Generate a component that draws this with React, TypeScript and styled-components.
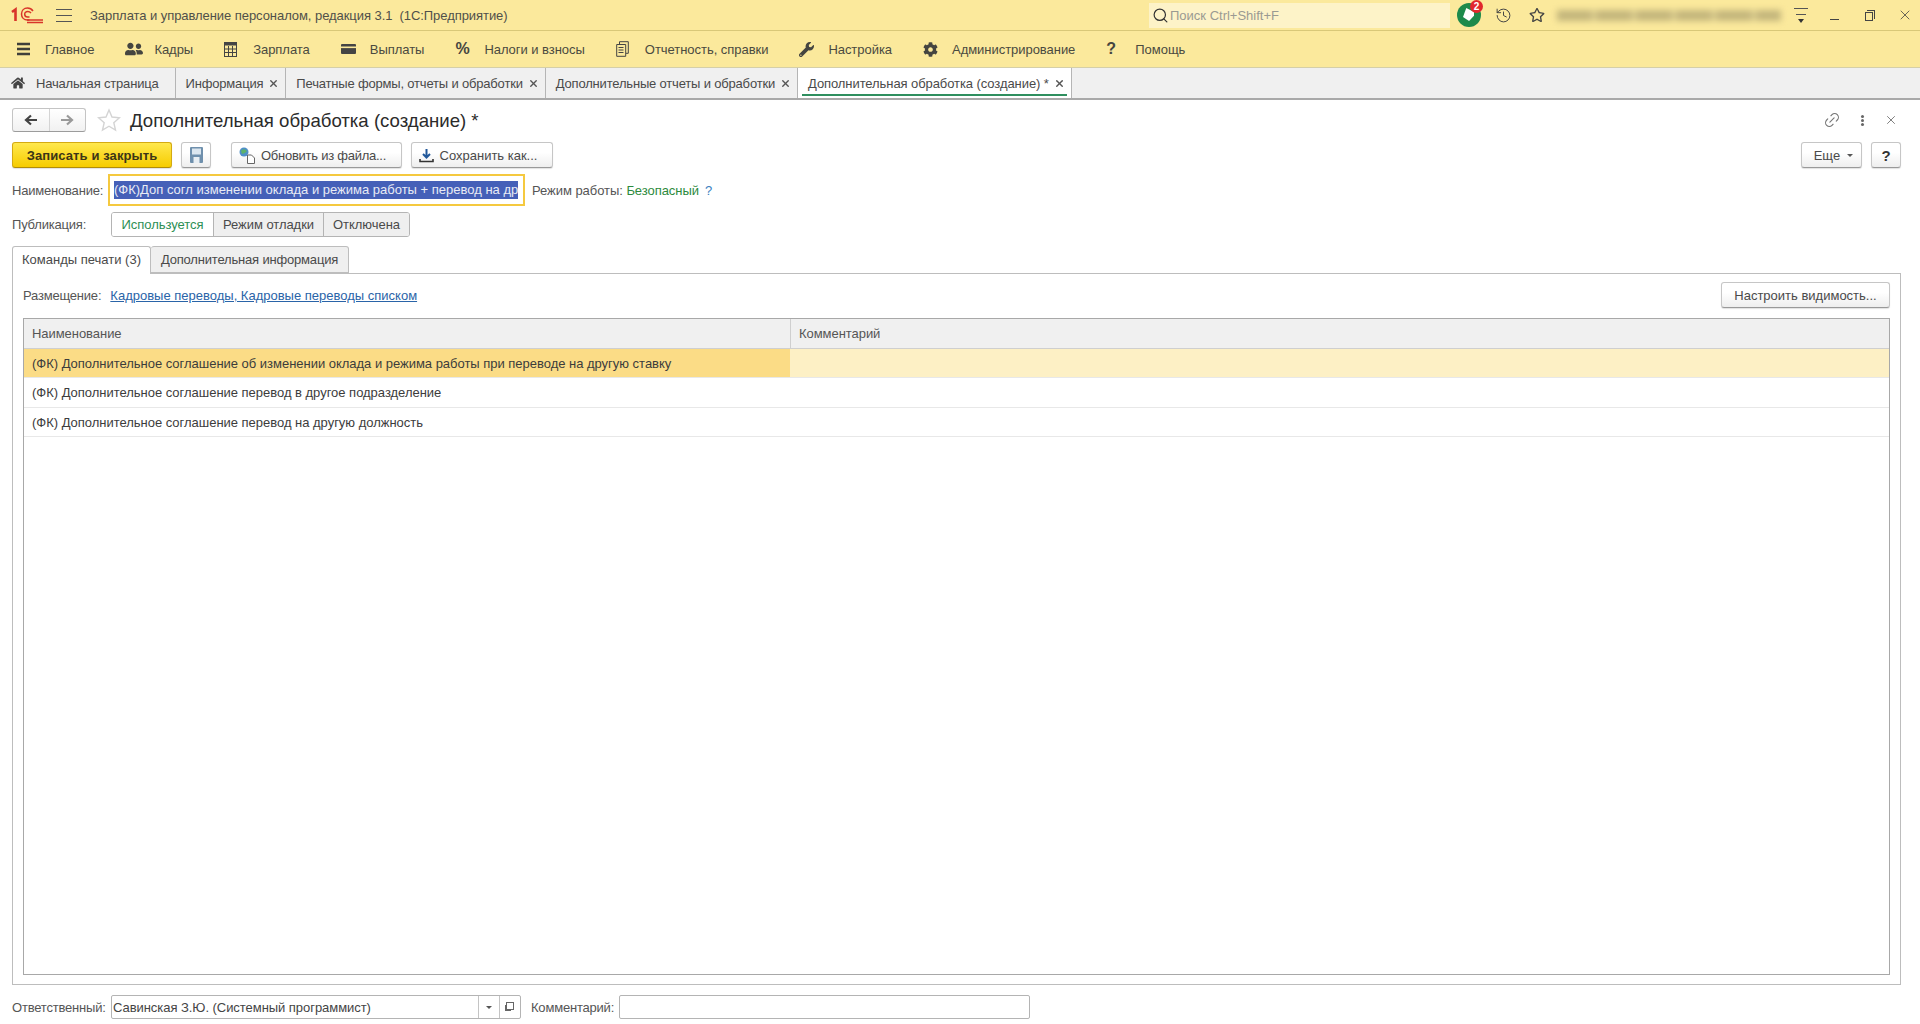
import React from "react";
import styled, { createGlobalStyle } from "styled-components";
import {
  FaHome,
  FaUserFriends,
  FaWrench,
  FaCog,
  FaRegStar,
} from "react-icons/fa";
import { Link2, History, X, Search } from "lucide-react";

const GlobalStyle = createGlobalStyle`
  html, body {
    margin: 0;
    padding: 0;
    background: #fff;
  }
  * {
    box-sizing: border-box;
  }
`;

const Page = styled.div`
  width: 1920px;
  height: 1024px;
  overflow: hidden;
  display: flex;
  flex-direction: column;
  font-family: "Liberation Sans", Arial, sans-serif;
  font-size: 13px;
  color: #4a4a4a;
  background: #fff;
`;

const TitleBar = styled.div`
  height: 31px;
  flex: none;
  display: flex;
  align-items: center;
  padding-right: 7px;
  background: #fbe99c;
  border-bottom: 1px solid #d9c878;
`;

const Logo = styled.svg`
  width: 32px;
  height: 18px;
  margin-left: 11px;
  flex: none;
`;

const Burger = styled.div`
  width: 16px;
  height: 13px;
  margin-left: 13px;
  flex: none;
  border-top: 1px solid #555;
  border-bottom: 1px solid #555;
  position: relative;
  &::after {
    content: "";
    position: absolute;
    left: 0;
    right: 0;
    top: 5px;
    height: 1px;
    background: #555;
  }
`;

const AppTitle = styled.div`
  margin-left: 18px;
  white-space: pre;
  color: #50504a;
  letter-spacing: -0.06px;
`;

const SearchBox = styled.div`
  margin-left: auto;
  width: 301px;
  height: 25px;
  display: flex;
  align-items: center;
  padding-left: 3px;
  background: #fdf3c8;
  color: #9a9a92;
  svg {
    color: #333;
    margin-right: 1px;
  }
`;

const Badge = styled.div`
  width: 24px;
  height: 24px;
  margin-left: 7px;
  flex: none;
  border-radius: 50%;
  background: #1d8a4b;
  position: relative;
  &::before {
    content: "";
    position: absolute;
    left: 6px;
    top: 5px;
    width: 11px;
    height: 13px;
    background: #fff;
    clip-path: polygon(30% 0, 100% 30%, 100% 60%, 55% 100%, 0 70%);
  }
`;

const BadgeCount = styled.span`
  position: absolute;
  top: -3px;
  right: -2px;
  width: 13px;
  height: 13px;
  border-radius: 50%;
  background: #e1282d;
  color: #fff;
  font-size: 10px;
  font-weight: bold;
  line-height: 13px;
  text-align: center;
`;

const TitleIcon = styled.div<{ $left: number; $size?: number }>`
  margin-left: ${(p) => p.$left}px;
  flex: none;
  display: flex;
  color: #444;
  svg {
    width: ${(p) => p.$size ?? 17}px;
    height: ${(p) => p.$size ?? 17}px;
  }
`;

const BlurredUser = styled.div`
  width: 224px;
  height: 11px;
  margin-left: 12px;
  flex: none;
  background: repeating-linear-gradient(
    90deg,
    #c4b67c 0 34px,
    #d8ca8c 34px 40px
  );
  filter: blur(3px);
`;

const FilterIcon = styled.div`
  width: 14px;
  height: 15px;
  margin-left: 13px;
  flex: none;
  border-top: 1px solid #555;
  position: relative;
  &::before {
    content: "";
    position: absolute;
    left: 2px;
    right: 2px;
    top: 5px;
    height: 1px;
    background: #555;
  }
  &::after {
    content: "";
    position: absolute;
    left: 4px;
    bottom: 0;
    border-left: 3px solid transparent;
    border-right: 3px solid transparent;
    border-top: 4px solid #333;
  }
`;

const MinButton = styled.div`
  width: 9px;
  height: 1px;
  margin: 8px 0 0 22px;
  flex: none;
  background: #444;
`;

const RestoreButton = styled.div`
  width: 8px;
  height: 9px;
  margin-left: 26px;
  flex: none;
  border: 1px solid #444;
  position: relative;
  top: 1px;
  &::before {
    content: "";
    position: absolute;
    left: 1px;
    top: -3px;
    width: 7px;
    height: 8px;
    border-top: 1px solid #444;
    border-right: 1px solid #444;
  }
`;

const MenuBar = styled.div`
  height: 37px;
  flex: none;
  display: flex;
  align-items: center;
  padding-left: 14px;
  background: #fbe99c;
  border-bottom: 1px solid #d5cfa8;
`;

const MenuItem = styled.div`
  display: flex;
  align-items: center;
  padding-right: 29px;
  color: #4a4a40;
  letter-spacing: -0.04px;
`;

const MenuIcon = styled.span`
  width: 31px;
  flex: none;
  display: flex;
  align-items: center;
  padding-left: 2px;
  color: #454540;
  font-size: 16px;
  font-weight: bold;
`;

const TabBar = styled.div`
  height: 32px;
  flex: none;
  display: flex;
  background: #f0f0f0;
  border-bottom: 2px solid #a9a9a9;
`;

const PageTab = styled.div<{ $active?: boolean }>`
  display: flex;
  align-items: center;
  padding: 0 6px 0 10px;
  border-right: 1px solid #b5b5b5;
  background: ${(p) => (p.$active ? "#fff" : "transparent")};
  position: relative;
  white-space: pre;
  letter-spacing: ${(p) => (p.$active ? "-0.08px" : "-0.18px")};
  ${(p) =>
    p.$active &&
    `&::after {
      content: "";
      position: absolute;
      left: 4px;
      right: 4px;
      bottom: 2px;
      height: 2px;
      background: #2f8f5f;
    }`}
`;

const HomeTab = styled(PageTab)`
  padding: 0 16px 0 11px;
  svg {
    margin-right: 11px;
    color: #444;
  }
`;

const CloseMark = styled(X)`
  margin-left: 5px;
  color: #555;
`;

const Content = styled.div`
  flex: 1;
  min-height: 0;
  display: flex;
  flex-direction: column;
  padding: 8px 19px 5px 12px;
`;

const FormHeader = styled.div`
  height: 24px;
  flex: none;
  display: flex;
  align-items: center;
`;

const NavGroup = styled.div`
  width: 74px;
  height: 24px;
  flex: none;
  display: flex;
  border: 1px solid #c4c4c4;
  border-bottom-color: #9c9c9c;
  border-radius: 3px;
  background: linear-gradient(#fff, #f1f1f1);
`;

const NavButton = styled.div<{ $dim?: boolean }>`
  flex: 1;
  display: flex;
  align-items: center;
  justify-content: center;
  color: ${(p) => (p.$dim ? "#999" : "#444")};
  & + & {
    border-left: 1px solid #d4d4d4;
  }
`;

const HeaderStar = styled.svg`
  width: 24px;
  height: 24px;
  margin-left: 11px;
  flex: none;
`;

const FormTitle = styled.h1`
  margin: 2px 0 0 9px;
  font-size: 18.6px;
  font-weight: normal;
  color: #2b2b2b;
  white-space: pre;
`;

const HeaderTools = styled.div`
  margin-left: auto;
  margin-right: 3px;
  display: flex;
  align-items: center;
  color: #777;
`;

const KebabDots = styled.div`
  width: 3px;
  height: 3px;
  margin: 0 20px 0 20px;
  border-radius: 50%;
  background: #666;
  box-shadow: 0 -4px 0 #666, 0 4px 0 #666;
`;

const CommandBar = styled.div`
  height: 26px;
  margin-top: 10px;
  flex: none;
  display: flex;
  align-items: stretch;
`;

const Button = styled.div<{ $width?: number; $left?: number; $tight?: boolean }>`
  width: ${(p) => (p.$width ? `${p.$width}px` : "auto")};
  margin-left: ${(p) => p.$left ?? 0}px;
  flex: none;
  display: flex;
  align-items: center;
  justify-content: center;
  border: 1px solid #c6c6c6;
  border-bottom-color: #999;
  border-radius: 3px;
  background: linear-gradient(#fff 40%, #eeeeee);
  box-shadow: 0 1px 1px rgba(0, 0, 0, 0.12);
  color: #4a4a4a;
  white-space: pre;
  letter-spacing: ${(p) => (p.$tight ? "-0.25px" : "0")};
  svg {
    margin-right: 6px;
    flex: none;
  }
`;

const PrimaryButton = styled(Button)`
  border-color: #d4aa12;
  border-bottom-color: #b18d08;
  background: linear-gradient(#ffe84d, #f6cc00);
  color: #3c3517;
  font-weight: bold;
  letter-spacing: 0.1px;
`;

const IconTextButton = styled(Button)`
  padding-right: 8px;
`;

const MoreButton = styled(Button)`
  padding-left: 4px;
`;

const HelpButton = styled(Button)`
  font-size: 15px;
  font-weight: bold;
  color: #333;
`;

const VisibilityButton = styled(Button)`
  height: 26px;
`;

const Spacer = styled.div`
  margin-left: auto;
`;

const NameRow = styled.div`
  height: 32px;
  margin-top: 6px;
  flex: none;
  display: flex;
  align-items: center;
`;

const FieldLabel = styled.span<{ $width?: number; $left?: number }>`
  width: ${(p) => (p.$width ? `${p.$width}px` : "auto")};
  margin-left: ${(p) => p.$left ?? 0}px;
  flex: none;
  color: #555;
  white-space: pre;
  letter-spacing: -0.2px;
`;

const NameInput = styled.div`
  width: 417px;
  height: 32px;
  flex: none;
  display: flex;
  align-items: center;
  padding-left: 4px;
  border: 2px solid #f5c93f;
  overflow: hidden;
`;

const SelectedText = styled.span`
  height: 18px;
  line-height: 18px;
  white-space: pre;
  background: #4560b8;
  color: #e8ebf5;
`;

const GreenText = styled.span`
  color: #2d8a3d;
`;

const HelpMark = styled.span`
  margin-left: 6px;
  color: #3c7fc0;
`;

const ModeInfo = styled.div`
  margin-left: 7px;
  white-space: pre;
  color: #555;
  letter-spacing: -0.05px;
`;

const PublishRow = styled.div`
  height: 25px;
  margin-top: 6px;
  flex: none;
  display: flex;
  align-items: center;
`;

const Segments = styled.div`
  display: flex;
  height: 25px;
  border: 1px solid #b4b4b4;
  border-radius: 3px;
  overflow: hidden;
`;

const Segment = styled.div<{ $width: number; $on?: boolean }>`
  width: ${(p) => p.$width}px;
  display: flex;
  align-items: center;
  justify-content: center;
  background: ${(p) => (p.$on ? "#fff" : "#efefef")};
  color: ${(p) => (p.$on ? "#2d8f55" : "#4a4a4a")};
  letter-spacing: -0.05px;
  & + & {
    border-left: 1px solid #b4b4b4;
  }
`;

const PanelTabs = styled.div`
  height: 27px;
  margin-top: 9px;
  flex: none;
  display: flex;
`;

const PanelTab = styled.div<{ $width: number; $active?: boolean }>`
  width: ${(p) => p.$width}px;
  display: flex;
  align-items: center;
  justify-content: center;
  padding-bottom: ${(p) => (p.$active ? "3px" : "1px")};
  border: 1px solid #bdbdbd;
  border-bottom: ${(p) => (p.$active ? "none" : "1px solid #bdbdbd")};
  border-left: ${(p) => (p.$active ? "1px solid #bdbdbd" : "none")};
  border-radius: 3px 3px 0 0;
  background: ${(p) => (p.$active ? "#fff" : "#efefef")};
  height: ${(p) => (p.$active ? "28px" : "27px")};
  letter-spacing: ${(p) => (p.$active ? "0" : "-0.18px")};
  position: relative;
  z-index: 1;
`;

const Panel = styled.div`
  flex: 1;
  min-height: 0;
  display: flex;
  flex-direction: column;
  padding: 8px 10px 9px 10px;
  border: 1px solid #bdbdbd;
`;

const PlacementRow = styled.div`
  height: 26px;
  flex: none;
  display: flex;
  align-items: center;
`;

const PlacementLink = styled.a`
  margin-left: 9px;
  color: #2a64a8;
  text-decoration: underline;
`;

const Table = styled.div`
  flex: 1;
  min-height: 0;
  margin-top: 10px;
  border: 1px solid #a8a8a8;
`;

const TableHead = styled.div`
  height: 30px;
  display: grid;
  grid-template-columns: 766px 1fr;
  background: #f0f0f0;
  border-bottom: 1px solid #cfcfcf;
`;

const HeadCell = styled.div`
  display: flex;
  align-items: center;
  padding-left: 8px;
  color: #555;
  letter-spacing: -0.05px;
  & + & {
    border-left: 1px solid #cfcfcf;
  }
`;

const Row = styled.div<{ $height: number; $selected?: boolean }>`
  height: ${(p) => p.$height}px;
  display: grid;
  grid-template-columns: 766px 1fr;
  background: ${(p) => (p.$selected ? "#fdf0c5" : "#fff")};
  border-bottom: 1px solid #e8e8e8;
`;

const Cell = styled.div<{ $current?: boolean }>`
  display: flex;
  align-items: center;
  padding: 1px 0 0 8px;
  white-space: pre;
  color: #3c3c3c;
  letter-spacing: -0.02px;
  background: ${(p) => (p.$current ? "#fbdc86" : "transparent")};
`;

const Footer = styled.div`
  height: 24px;
  margin-top: 10px;
  flex: none;
  display: flex;
  align-items: center;
`;

const Combo = styled.div`
  width: 410px;
  height: 24px;
  flex: none;
  display: flex;
  border: 1px solid #b4b4b4;
  border-radius: 2px;
`;

const ComboValue = styled.div`
  flex: 1;
  display: flex;
  align-items: center;
  padding-left: 1px;
  color: #444;
  letter-spacing: -0.05px;
`;

const ComboButton = styled.div<{ $width: number }>`
  width: ${(p) => p.$width}px;
  flex: none;
  display: flex;
  align-items: center;
  justify-content: center;
  border-left: 1px solid #c4c4c4;
`;

const Caret = styled.span`
  width: 0;
  height: 0;
  border-left: 3px solid transparent;
  border-right: 3px solid transparent;
  border-top: 3px solid #555;
`;

const OpenMark = styled.span`
  width: 8px;
  height: 8px;
  border: 1px solid #666;
  position: relative;
  top: -1px;
  border-left-width: 1px;
  box-shadow: -2px 2px 0 -1px #666;
`;

const CommentInput = styled.div`
  width: 411px;
  height: 24px;
  margin-left: 5px;
  flex: none;
  border: 1px solid #b4b4b4;
  border-radius: 2px;
`;

const ArrowIcon = ({ back, color }: { back?: boolean; color: string }) => (
  <svg width="14" height="12" viewBox="0 0 14 12">
    <path
      d={back ? "M13 6H3M7 1.5 2 6l5 4.5" : "M1 6h10M7 1.5 12 6l-5 4.5"}
      fill="none"
      stroke={color}
      strokeWidth="2.2"
    />
  </svg>
);

const BarsIcon = () => (
  <svg width="15" height="14" viewBox="0 0 15 14">
    <path d="M1 2h13M1 7h13M1 12h13" stroke="#3f3f3a" strokeWidth="2.4" />
  </svg>
);

const CalcIcon = () => (
  <svg width="13" height="15" viewBox="0 0 13 15">
    <rect x="0.5" y="0.5" width="12" height="14" fill="none" stroke="#444" />
    <rect x="0.5" y="0.5" width="12" height="3" fill="#444" />
    <path
      d="M4.5 4v10M8.5 4v10M1 7h11M1 10.5h11"
      stroke="#444"
      strokeWidth="1"
    />
  </svg>
);

const CardIcon = () => (
  <svg width="15" height="12" viewBox="0 0 15 12">
    <rect x="0" y="1" width="15" height="10" rx="1" fill="#444" />
    <rect x="0" y="3.5" width="15" height="1.6" fill="#fbe99c" />
  </svg>
);

const ReportIcon = () => (
  <svg width="13" height="16" viewBox="0 0 13 16">
    <path
      d="M3.5 3V.7h8.8v11.6H10M.7 3.5h9v11.8H.7zM2.500 6.500h5M2.500 9h5M2.500 11.500h5"
      fill="none"
      stroke="#444"
    />
  </svg>
);

const SaveIcon = () => (
  <svg width="13" height="16" viewBox="0 0 13 16" style={{ marginRight: 0 }}>
    <rect x="0" y="0" width="13" height="16" rx="1" fill="#6f90ad" />
    <rect x="2" y="1.500" width="9" height="6" fill="#dbe6ef" />
    <rect x="3.500" y="10" width="6" height="6" fill="#e8eef3" />
  </svg>
);

const RefreshIcon = () => (
  <svg width="16" height="17" viewBox="0 0 16 17">
    <circle cx="5" cy="5" r="4.500" fill="#4f8fc7" />
    <path d="M2 3.500 5 2l3 2-2 2-3 1z" fill="#5db36a" />
    <path d="M8.500 8h4l3 3v5.500h-7z" fill="#fff" stroke="#666" />
  </svg>
);

const DownloadIcon = () => (
  <svg width="15" height="15" viewBox="0 0 15 15">
    <path d="M7.500 1v8M4 6l3.500 3.500L11 6" fill="none" stroke="#21579a" strokeWidth="2" />
    <path d="M1 11v2.500h13V11" fill="none" stroke="#333" strokeWidth="1.6" />
  </svg>
);

const menu: [React.ReactNode, string][] = [
  [<BarsIcon />, "Главное"],
  [<FaUserFriends size={18} />, "Кадры"],
  [<CalcIcon />, "Зарплата"],
  [<CardIcon />, "Выплаты"],
  ["%", "Налоги и взносы"],
  [<ReportIcon />, "Отчетность, справки"],
  [<FaWrench size={15} />, "Настройка"],
  [<FaCog size={15} />, "Администрирование"],
  ["?", "Помощь"],
];

const tabs = [
  "Информация",
  "Печатные формы, отчеты и обработки",
  "Дополнительные отчеты и обработки",
];

const rows = [
  "(ФК) Дополнительное соглашение об изменении оклада и режима работы при переводе на другую ставку",
  "(ФК) Дополнительное соглашение перевод в другое подразделение",
  "(ФК) Дополнительное соглашение перевод на другую должность",
];

export default function App() {
  return (
    <Page>
      <GlobalStyle />
      <TitleBar>
        <Logo viewBox="0 0 32 18">
          <path
            d="M1 6l3.500-2.500V15"
            fill="none"
            stroke="#d8352a"
            strokeWidth="2.600"
          />
          <path
            d="M22 5C20.500 2.800 18.500 2 16.500 2 13 2 10.500 4.500 10.500 8s2.500 6 6 6h2M20 7c-.8-1-2-1.500-3.300-1.500-1.700 0-3 1-3 2.700s1.300 2.800 3 2.800h1.800"
            fill="none"
            stroke="#d8352a"
            strokeWidth="1.500"
          />
          <path d="M16 14h16M16 16.500h16" stroke="#d8352a" strokeWidth="1.300" />
        </Logo>
        <Burger />
        <AppTitle>Зарплата и управление персоналом, редакция 3.1  (1С:Предприятие)</AppTitle>
        <SearchBox>
          <Search size={17} strokeWidth={1.7} />
          Поиск Ctrl+Shift+F
        </SearchBox>
        <Badge>
          <BadgeCount>2</BadgeCount>
        </Badge>
        <TitleIcon $left={14}>
          <History strokeWidth={1.4} />
        </TitleIcon>
        <TitleIcon $left={17} $size={16}>
          <FaRegStar />
        </TitleIcon>
        <BlurredUser />
        <FilterIcon />
        <MinButton />
        <RestoreButton />
        <TitleIcon $left={24} $size={16}>
          <X strokeWidth={1.2} />
        </TitleIcon>
      </TitleBar>

      <MenuBar>
        {menu.map(([icon, label]) => (
          <MenuItem key={label}>
            <MenuIcon>{icon}</MenuIcon>
            {label}
          </MenuItem>
        ))}
      </MenuBar>

      <TabBar>
        <HomeTab>
          <FaHome size={14} />
          Начальная страница
        </HomeTab>
        {tabs.map((t) => (
          <PageTab key={t}>
            {t}
            <CloseMark size={11} strokeWidth={3} />
          </PageTab>
        ))}
        <PageTab $active>
          Дополнительная обработка (создание) *
          <CloseMark size={11} strokeWidth={3} />
        </PageTab>
      </TabBar>

      <Content>
        <FormHeader>
          <NavGroup>
            <NavButton>
              <ArrowIcon back color="#444" />
            </NavButton>
            <NavButton $dim>
              <ArrowIcon color="#999" />
            </NavButton>
          </NavGroup>
          <HeaderStar viewBox="0 0 24 24">
            <path
              d="M12 2l3 7 7.500.7-5.700 5 1.700 7.300L12 18.200 5.500 22l1.700-7.300-5.700-5L9 9z"
              fill="#fff"
              stroke="#d4d4d4"
              strokeWidth="1.400"
            />
          </HeaderStar>
          <FormTitle>Дополнительная обработка (создание) *</FormTitle>
          <HeaderTools>
            <Link2 size={18} strokeWidth={1.5} style={{ transform: "rotate(-45deg)" }} />
            <KebabDots />
            <X size={14} strokeWidth={1.6} />
          </HeaderTools>
        </FormHeader>

        <CommandBar>
          <PrimaryButton $width={160}>Записать и закрыть</PrimaryButton>
          <Button $width={30} $left={9}>
            <SaveIcon />
          </Button>
          <IconTextButton $width={171} $left={20} $tight>
            <RefreshIcon />
            Обновить из файла...
          </IconTextButton>
          <IconTextButton $width={142} $left={9}>
            <DownloadIcon />
            Сохранить как...
          </IconTextButton>
          <Spacer />
          <MoreButton $width={61}>
            Еще  <Caret />
          </MoreButton>
          <HelpButton $width={30} $left={9}>
            ?
          </HelpButton>
        </CommandBar>

        <NameRow>
          <FieldLabel $width={96}>Наименование:</FieldLabel>
          <NameInput>
            <SelectedText>(ФК)Доп согл изменении оклада и режима работы + перевод на др</SelectedText>
          </NameInput>
          <ModeInfo>
            Режим работы: <GreenText>Безопасный</GreenText>
            <HelpMark>?</HelpMark>
          </ModeInfo>
        </NameRow>

        <PublishRow>
          <FieldLabel $width={99}>Публикация:</FieldLabel>
          <Segments>
            <Segment $width={101} $on>
              Используется
            </Segment>
            <Segment $width={110}>Режим отладки</Segment>
            <Segment $width={86}>Отключена</Segment>
          </Segments>
        </PublishRow>

        <PanelTabs>
          <PanelTab $width={139} $active>
            Команды печати (3)
          </PanelTab>
          <PanelTab $width={198}>Дополнительная информация</PanelTab>
        </PanelTabs>

        <Panel>
          <PlacementRow>
            <FieldLabel>Размещение:</FieldLabel>
            <PlacementLink>Кадровые переводы, Кадровые переводы списком</PlacementLink>
            <Spacer />
            <VisibilityButton $width={169}>Настроить видимость...</VisibilityButton>
          </PlacementRow>
          <Table>
            <TableHead>
              <HeadCell>Наименование</HeadCell>
              <HeadCell>Комментарий</HeadCell>
            </TableHead>
            {rows.map((r, i) => (
              <Row key={r} $height={i === 0 ? 29 : 29.5} $selected={i === 0}>
                <Cell $current={i === 0}>{r}</Cell>
                <Cell />
              </Row>
            ))}
          </Table>
        </Panel>

        <Footer>
          <FieldLabel $width={99}>Ответственный:</FieldLabel>
          <Combo>
            <ComboValue>Савинская З.Ю. (Системный программист)</ComboValue>
            <ComboButton $width={21}>
              <Caret />
            </ComboButton>
            <ComboButton $width={21}>
              <OpenMark />
            </ComboButton>
          </Combo>
          <FieldLabel $left={10}>Комментарий:</FieldLabel>
          <CommentInput />
        </Footer>
      </Content>
    </Page>
  );
}
